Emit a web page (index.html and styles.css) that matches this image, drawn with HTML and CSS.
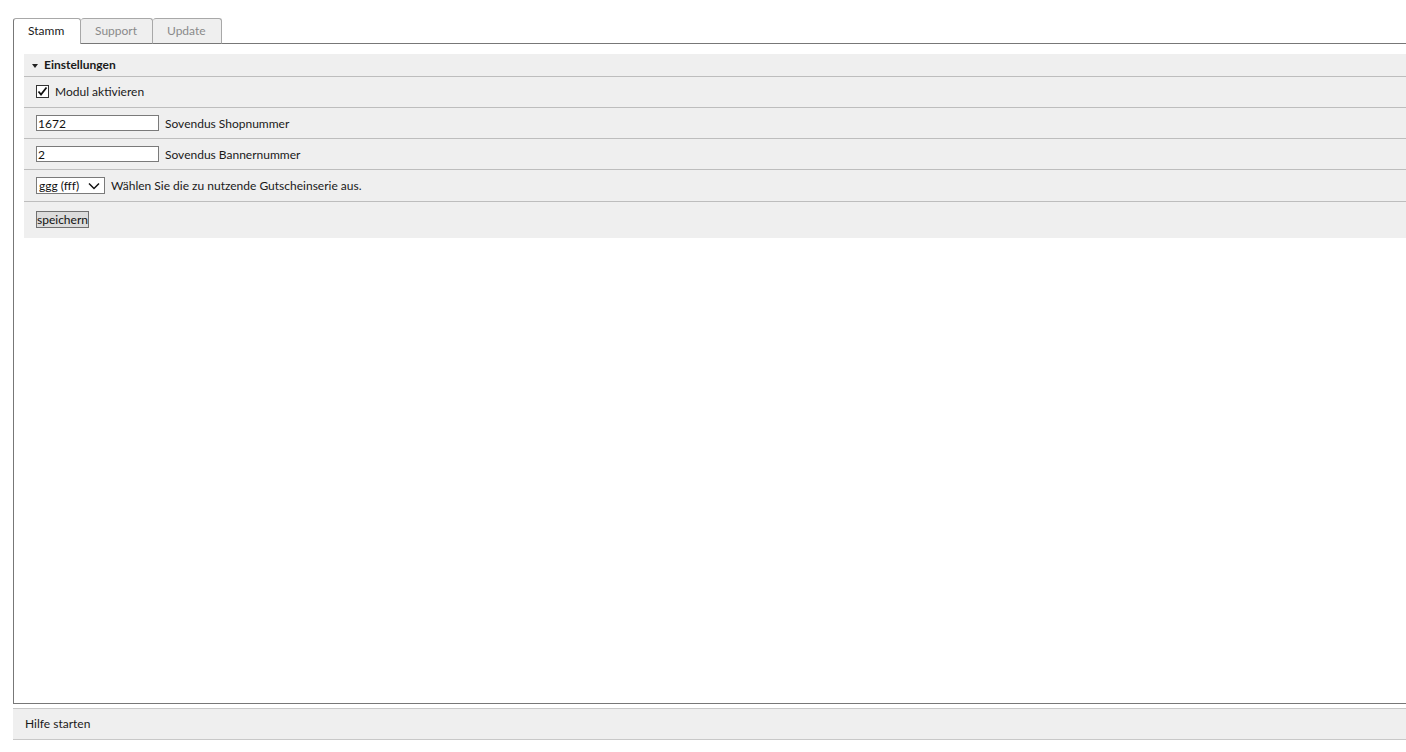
FILE: index.html
```html
<!DOCTYPE html>
<html lang="de">
<head>
<meta charset="utf-8">
<title>Sovendus</title>
<link rel="stylesheet" href="styles.css">
</head>
<body>
<div class="page">
  <div class="tabs">
    <div class="tab active">Stamm</div>
    <div class="tab">Support</div>
    <div class="tab">Update</div>
    <div class="tab-fill"></div>
  </div>
  <div class="panel">
    <div class="box">
      <div class="box-head"><span class="caret"></span>Einstellungen</div>
      <div class="row"><label class="check"><input type="checkbox" checked> Modul aktivieren</label></div>
      <div class="row"><input class="text" type="text" value="1672"> <span>Sovendus Shopnummer</span></div>
      <div class="row"><input class="text" type="text" value="2"> <span>Sovendus Bannernummer</span></div>
      <div class="row tall"><select class="sel"><option>ggg (fff)</option></select> <span>Wählen Sie die zu nutzende Gutscheinserie aus.</span></div>
      <div class="row last"><button class="btn">speichern</button></div>
    </div>
  </div>
  <div class="footer">Hilfe starten</div>
</div>
</body>
</html>
```
FILE: styles.css
```css
html, body {
  margin: 0;
  padding: 0;
  background: #fff;
  overflow: hidden;
}
body {
  font-family: Lato, "Liberation Sans", Arial, sans-serif;
  font-size: 12px;
  color: #1a1a1a;
}
.page {
  padding: 18px 0 0 13px;
  width: 1420px;
}
.tabs {
  display: flex;
  height: 26px;
}
.tab {
  box-sizing: border-box;
  height: 26px;
  padding: 4px 14px 0 14px;
  border: 1px solid #a8a8a8;
  border-left: none;
  border-radius: 3px 3px 0 0;
  background: #efefef;
  color: #8a8a8a;
  border-bottom: 1px solid #777;
}
.tab:first-child {
  border-left: 1px solid #777;
}
.tab.active {
  background: #fff;
  color: #1a1a1a;
  border-bottom: none;
  width: 68px;
  padding-left: 14px;
}
.tab:nth-child(2) { width: 72px; }
.tab:nth-child(3) { width: 69px; }
.tab-fill {
  flex: 1;
  border-bottom: 1px solid #777;
}
.panel {
  box-sizing: border-box;
  height: 660px;
  border-left: 1px solid #777;
  border-bottom: 1px solid #777;
  padding: 10px 0 0 10px;
}
.box {
  background: #efefef;
}
.box-head {
  height: 23px;
  box-sizing: border-box;
  padding: 3px 0 0 8px;
  font-weight: bold;
  border-bottom: 1px solid #bdbdbd;
  display: flex;
  align-items: flex-start;
}
.caret {
  display: inline-block;
  width: 0;
  height: 0;
  border-left: 3px solid transparent;
  border-right: 3px solid transparent;
  border-top: 4px solid #222;
  margin: 7px 6px 0 0;
}
.row {
  height: 31px;
  box-sizing: border-box;
  border-bottom: 1px solid #bdbdbd;
  padding: 0 0 0 12px;
  display: flex;
  align-items: center;
  gap: 6px;
}
.row.tall {
  height: 32px;
}
.row.last {
  border-bottom: none;
  height: 36px;
  padding-bottom: 2px;
}
.check {
  display: flex;
  align-items: center;
  gap: 6px;
  margin-top: -2px;
}
.check input {
  -webkit-appearance: none;
  appearance: none;
  margin: 0;
  width: 13px;
  height: 13px;
  box-sizing: border-box;
  border: 1px solid #333;
  background: #fff url("data:image/svg+xml;utf8,<svg xmlns='http://www.w3.org/2000/svg' width='11' height='11' viewBox='0 0 11 11'><path d='M1.5 5.5 L4 8.5 L9.5 1.5' fill='none' stroke='%23111' stroke-width='1.8'/></svg>") center/11px 11px no-repeat;
}
.text {
  box-sizing: border-box;
  width: 123px;
  height: 16px;
  border: 1px solid #7a7a7a;
  padding: 0 1px;
  font-family: Lato, "Liberation Sans", Arial, sans-serif;
  font-size: 12px;
  background: #fff;
  color: #111;
  margin: 0;
}
.sel {
  -webkit-appearance: none;
  appearance: none;
  box-sizing: border-box;
  width: 69px;
  height: 17px;
  border: 1px solid #7a7a7a;
  border-radius: 0;
  font-family: Lato, "Liberation Sans", Arial, sans-serif;
  font-size: 12px;
  padding: 0 0 0 2px;
  background: #fff url("data:image/svg+xml;utf8,<svg xmlns='http://www.w3.org/2000/svg' width='12' height='8' viewBox='0 0 12 8'><path d='M1 1.5 L6 6.5 L11 1.5' fill='none' stroke='%23111' stroke-width='1.5'/></svg>") right 4px center/12px 8px no-repeat;
  color: #111;
  margin: 0;
}
.btn {
  box-sizing: border-box;
  height: 17px;
  padding: 0;
  border: 1px solid #707070;
  border-radius: 0;
  background: #dcdcdc;
  font-family: Lato, "Liberation Sans", Arial, sans-serif;
  font-size: 12px;
  color: #111;
  margin: 0;
}
.footer {
  box-sizing: border-box;
  margin-top: 4px;
  height: 32px;
  background: #efefef;
  border-top: 1px solid #c8c8c8;
  border-bottom: 1px solid #c8c8c8;
  padding: 7px 0 0 12px;
}
```
